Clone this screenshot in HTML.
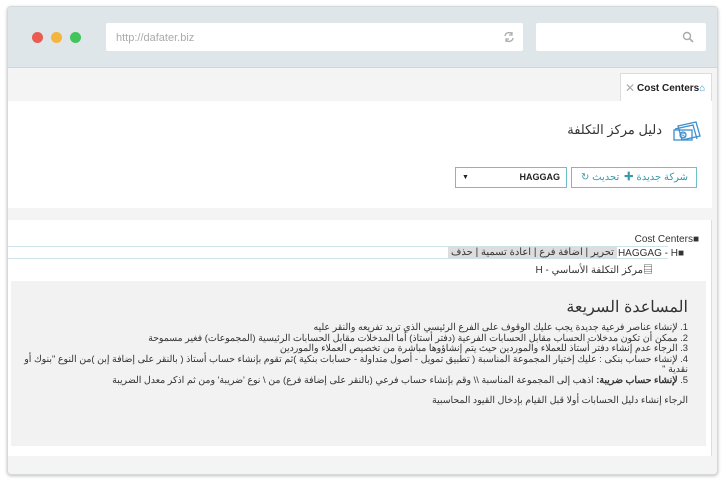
<!DOCTYPE html>
<html><head><meta charset="utf-8"><style>
*{box-sizing:border-box;margin:0;padding:0}
body{width:725px;height:485px;background:#fff;font-family:"Liberation Sans","Noto Sans CJK SC",sans-serif;position:relative;overflow:hidden}
.frame{position:absolute;left:7px;top:6px;width:711px;height:469px;border:1px solid #d4d9db;border-radius:4px;background:#f4f4f4;box-shadow:0 1px 3px rgba(0,0,0,.25);overflow:hidden}
.top{position:absolute;left:0;top:0;width:100%;height:61px;background:#dfe6e9;border-bottom:1px solid #cfd6d9}
.dot{position:absolute;top:25px;width:11px;height:11px;border-radius:50%}
.url{position:absolute;left:98px;top:16px;width:417px;height:28px;background:#fff;border-radius:2px;font-size:11px;color:#aaa;padding:9px 10px}
.srch{position:absolute;left:528px;top:16px;width:170px;height:28px;background:#fff;border-radius:2px}
.tabstrip{position:absolute;left:0;top:62px;width:100%;height:32px;background:#f4f4f4}
.tab{position:absolute;left:612px;top:4px;width:92px;height:29px;background:#fff;border:1px solid #ddd;border-bottom:none;font-size:10px;font-weight:bold;color:#222;padding:9px 0 0 16px}
.tab .x{position:absolute;left:4px;top:7px;color:#aaa;font-weight:normal;font-size:12px}
.main{position:absolute;left:0;top:94px;width:704px;height:355px;background:#fff;border-right:1px solid #ddd}
.card{position:absolute;left:0;top:0;width:704px;height:107px;background:#fff}
.band{position:absolute;left:0;top:107px;width:704px;height:12px;background:#f4f4f4}
.title{position:absolute;right:50px;top:21px;font-size:13px;color:#333}
.btns{position:absolute;left:563px;top:66px;width:126px;height:21px;border:1px solid #6ec0c8;font-size:10px;color:#3a9aa8;line-height:19px}
.sel{position:absolute;left:447px;top:66px;width:112px;height:21px;border:1px solid #6ec0c8;font-size:9px;font-weight:bold;color:#222;line-height:19px}
.tree{font-size:10px;color:#333;position:absolute}
.help{position:absolute;left:3px;top:180px;width:695px;height:165px;background:#f2f2f2;direction:rtl;padding:16px 18px 0 6px;color:#333}
.help h2{font-weight:normal;font-size:16px;color:#333;margin-bottom:5px}
.help p{font-size:9.4px;line-height:10.5px}
</style></head><body>
<div class="frame">
 <div class="top">
  <div class="dot" style="left:24px;background:#ec5b4f"></div>
  <div class="dot" style="left:43px;background:#f4b53f"></div>
  <div class="dot" style="left:62px;background:#3fc55b"></div>
  <div class="url">http://dafater.biz
   <svg style="position:absolute;right:8px;top:8px" width="12" height="12" viewBox="0 0 12 12"><path d="M2 5a4 4 0 0 1 7-2M10 7a4 4 0 0 1-7 2" stroke="#aaa" fill="none" stroke-width="1.3"/><path d="M9 1v3H6M3 11V8h3" stroke="#aaa" fill="none" stroke-width="1.2"/></svg></div>
  <div class="srch"><svg style="position:absolute;right:12px;top:8px" width="12" height="12" viewBox="0 0 12 12"><circle cx="5" cy="5" r="3.5" stroke="#aaa" fill="none" stroke-width="1.4"/><path d="M7.5 7.5L11 11" stroke="#aaa" stroke-width="1.6"/></svg></div>
 </div>
 <div class="tabstrip"><div class="tab"><span class="x">✕</span>Cost Centers<span style="color:#3a8fd0">⌂</span></div></div>
 <div class="main">
  <div class="card">
   <svg style="position:absolute;right:10px;top:19px" width="30" height="22" viewBox="0 0 30 22"><g fill="none" stroke="#3a8fd0" stroke-width="1.3"><path d="M6 6l18-4 4 14-18 4z"/><path d="M3 9l18-4 4 14"/><rect x="2" y="10" width="18" height="10"/><circle cx="11" cy="15" r="3"/></g><text x="9" y="18" font-size="7" fill="#3a8fd0" font-family="Liberation Sans">$</text></svg>
   <div class="title">دليل مركز التكلفة</div>
   <div class="btns"><span style="position:absolute;right:8px;top:0">✚ شركة جديدة</span><span style="position:absolute;left:9px;top:0">↻ تحديث</span></div>
   <div class="sel"><span style="position:absolute;right:6px;top:0">HAGGAG</span><span style="position:absolute;left:6px;top:0;font-size:7px">▼</span></div>
  </div>
  <div class="band"></div>
  <div class="tree" style="right:12px;top:133px">Cost Centers■</div>
  <div style="position:absolute;left:0;top:145px;width:660px;height:13px;border-top:1px solid #cfe3ea;border-bottom:1px solid #cfe3ea"></div>
  <div class="tree" style="right:27px;top:147px">HAGGAG - H■</div>
  <div class="tree" style="left:440px;top:146px;background:#ddd;padding:0 3px;direction:rtl">تحرير | اضافة فرع | اعادة تسمية | حذف</div>
  <div class="tree" style="right:58px;top:160px;direction:rtl">▤مركز التكلفة الأساسي - H</div>
  <div class="help">
   <h2>المساعدة السريعة</h2>
   <p>1. لإنشاء عناصر فرعية جديدة يجب عليك الوقوف على الفرع الرئيسي الذي تريد تفريعه والنقر عليه</p>
   <p>2. ممكن أن تكون مدخلات الحساب مقابل الحسابات الفرعية (دفتر أستاذ) أما المدخلات مقابل الحسابات الرئيسية (المجموعات) فغير مسموحة</p>
   <p>3. الرجاء عدم إنشاء دفتر أستاذ للعملاء والموردين حيث يتم إنشاؤوها مباشرة من تخصيص العملاء والموردين</p>
   <p>4. لإنشاء حساب بنكى : عليك إختيار المجموعة المناسبة ( تطبيق تمويل - أصول متداولة - حسابات بنكية )ثم تقوم بإنشاء حساب أستاذ ( بالنقر على إضافة إبن )من النوع "بنوك أو نقدية "</p>
   <p>5. <b>لإنشاء حساب ضريبة:</b> اذهب إلى المجموعة المناسبة \\ وقم بإنشاء حساب فرعي (بالنقر على إضافة فرع) من \ نوع 'ضريبة' ومن ثم اذكر معدل الضريبة</p>
   <p style="margin-top:10px">الرجاء إنشاء دليل الحسابات أولا قبل القيام بإدخال القيود المحاسبية</p>
  </div>
 </div>
</div>
</body></html>
